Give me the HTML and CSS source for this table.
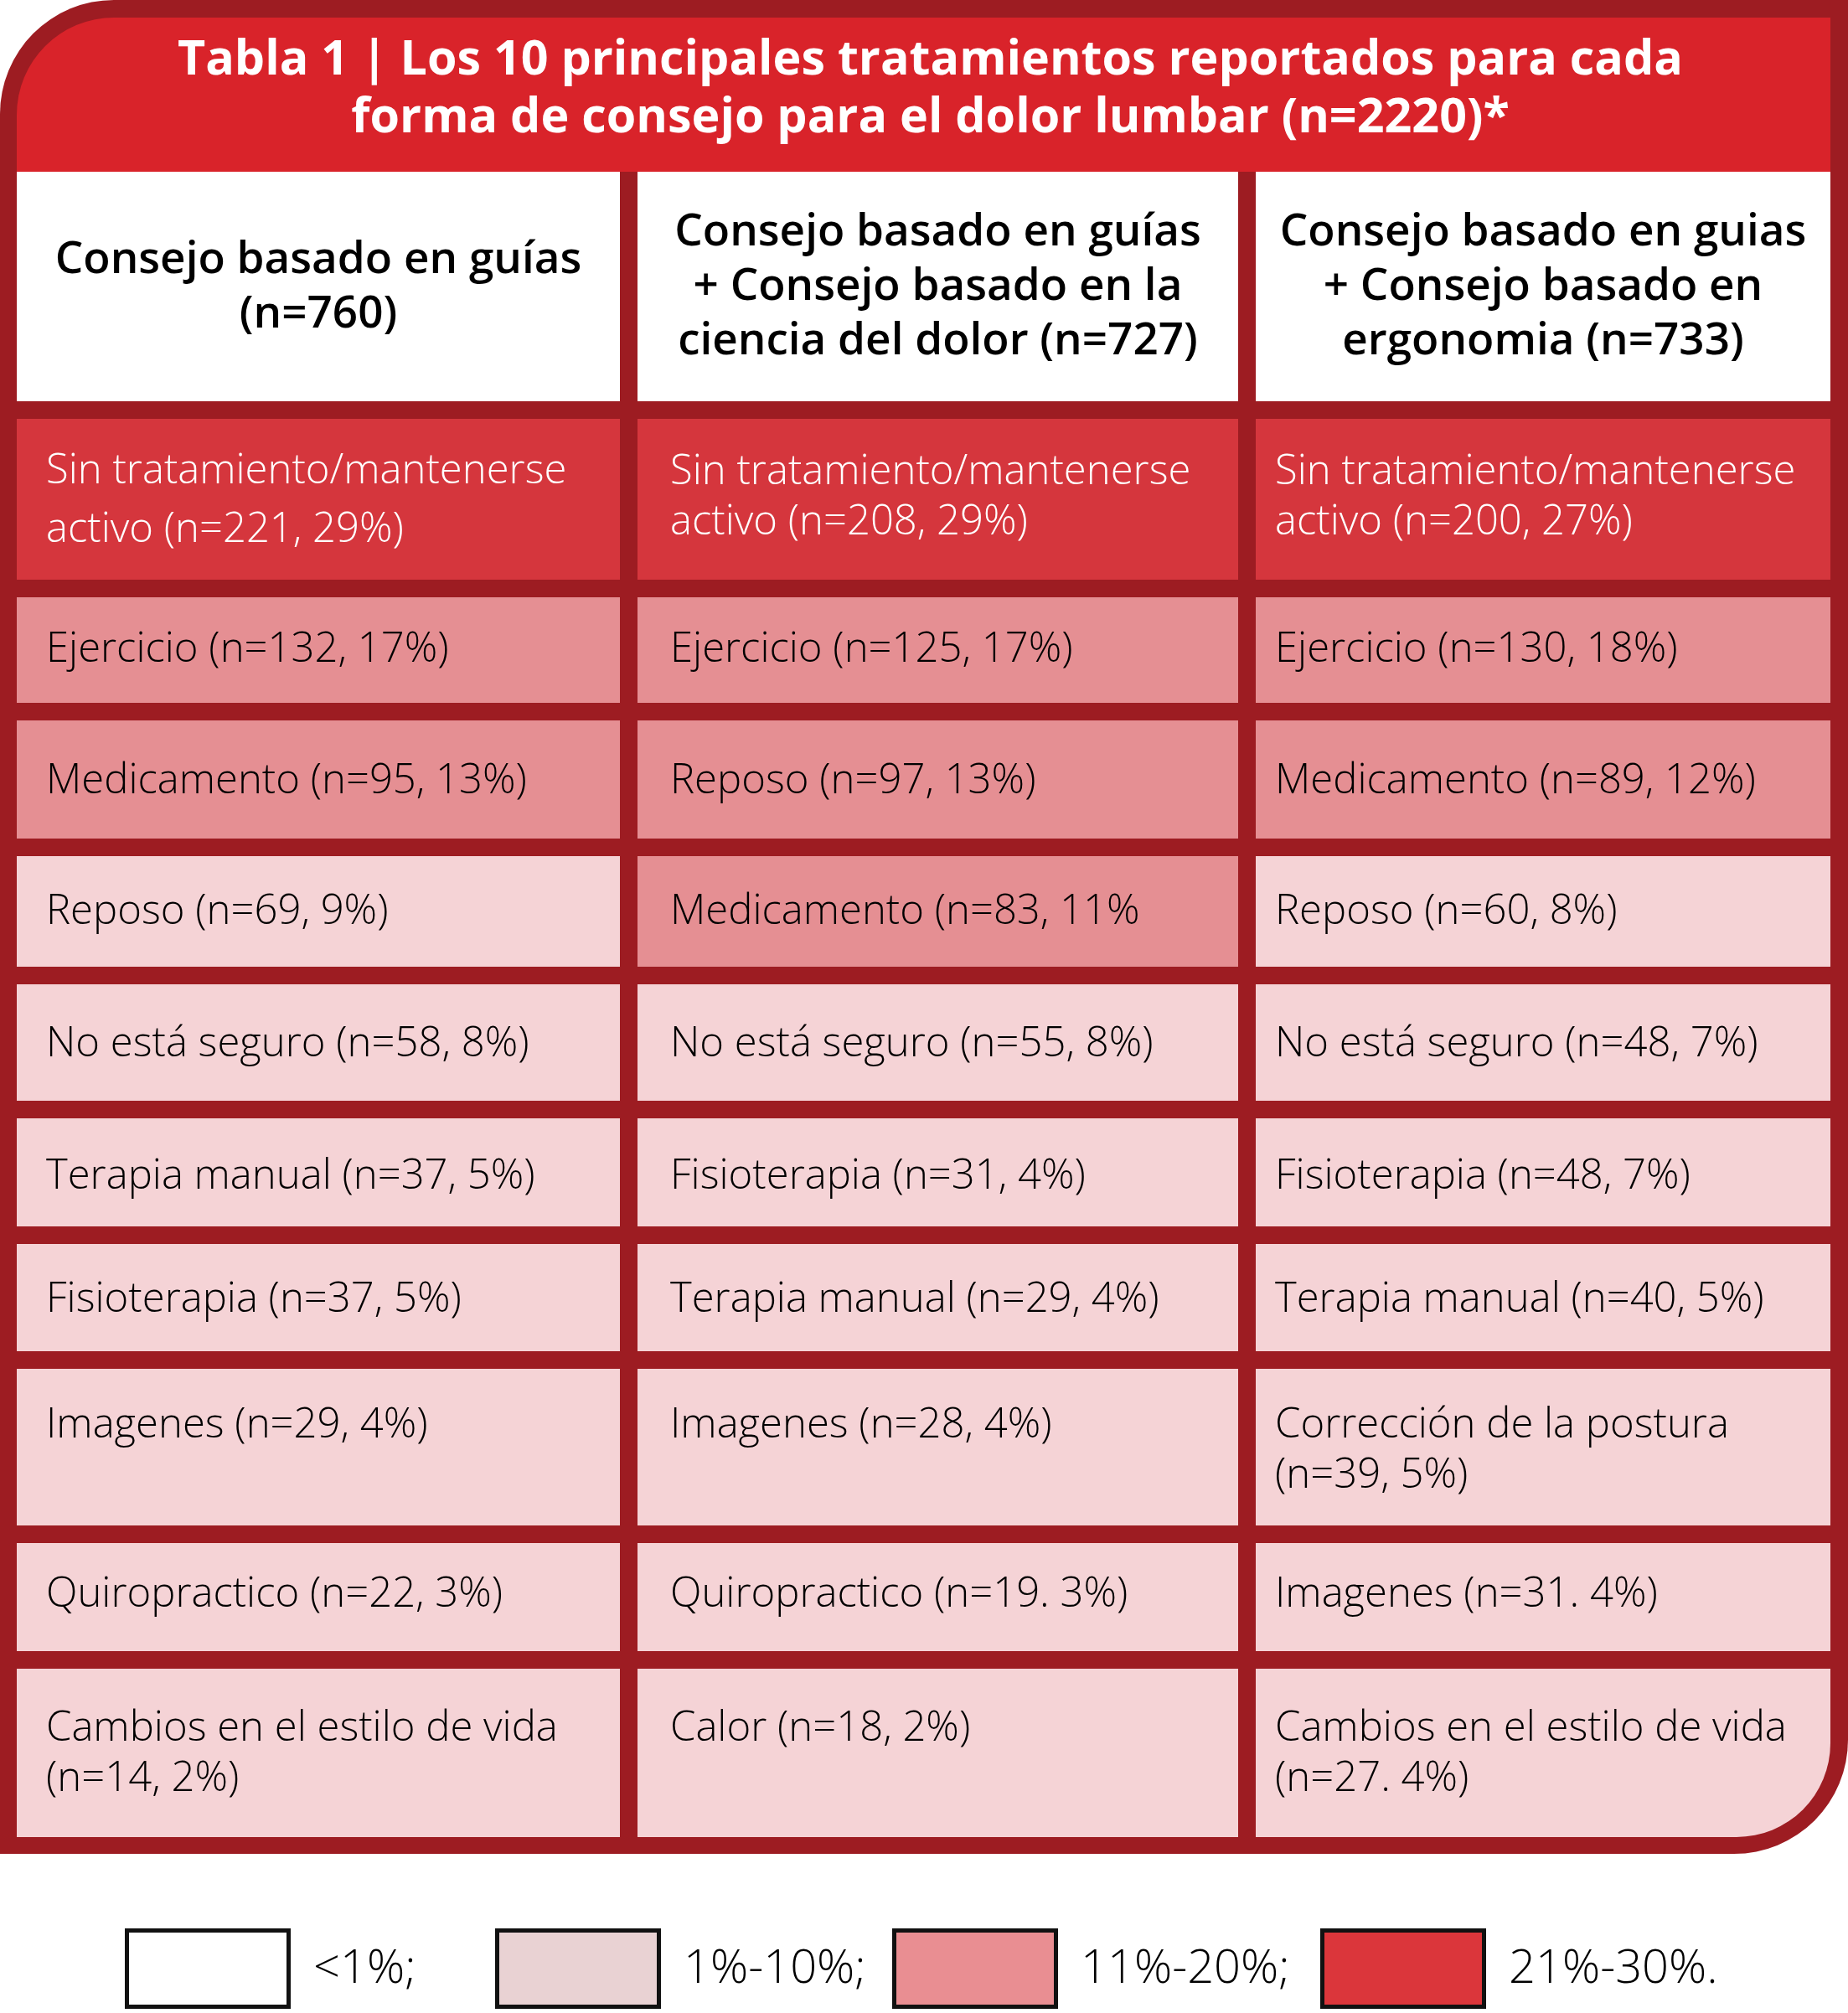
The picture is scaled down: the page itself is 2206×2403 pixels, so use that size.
FILE: index.html
```html
<!DOCTYPE html>
<html lang="es">
<head>
<meta charset="utf-8">
<title>Tabla 1</title>
<link rel="stylesheet" href="styles.css">
</head>
<body>
<div class="page">
  <div class="frame">
    <div class="title">Tabla 1 | Los 10 principales tratamientos reportados para cada<br>forma de consejo para el dolor lumbar (n=2220)*</div>
    <div class="table">
      <div class="row head">
        <div class="hcell">Consejo basado en guías<br>(n=760)</div>
        <div class="hcell">Consejo basado en guías<br>+ Consejo basado en la<br>ciencia del dolor (n=727)</div>
        <div class="hcell">Consejo basado en guias<br>+ Consejo basado en<br>ergonomia (n=733)</div>
      </div>
      <div class="row r1">
        <div class="cell c1 high loose">Sin tratamiento/mantenerse<br>activo (n=221, 29%)</div>
        <div class="cell c2 high">Sin tratamiento/mantenerse<br>activo (n=208, 29%)</div>
        <div class="cell c3 high">Sin tratamiento/mantenerse<br>activo (n=200, 27%)</div>
      </div>
      <div class="row r2">
        <div class="cell c1 mid">Ejercicio (n=132, 17%)</div>
        <div class="cell c2 mid">Ejercicio (n=125, 17%)</div>
        <div class="cell c3 mid">Ejercicio (n=130, 18%)</div>
      </div>
      <div class="row r3">
        <div class="cell c1 mid">Medicamento (n=95, 13%)</div>
        <div class="cell c2 mid">Reposo (n=97, 13%)</div>
        <div class="cell c3 mid">Medicamento (n=89, 12%)</div>
      </div>
      <div class="row r4">
        <div class="cell c1 low">Reposo (n=69, 9%)</div>
        <div class="cell c2 mid">Medicamento (n=83, 11%</div>
        <div class="cell c3 low">Reposo (n=60, 8%)</div>
      </div>
      <div class="row r5">
        <div class="cell c1 low">No está seguro (n=58, 8%)</div>
        <div class="cell c2 low">No está seguro (n=55, 8%)</div>
        <div class="cell c3 low">No está seguro (n=48, 7%)</div>
      </div>
      <div class="row r6">
        <div class="cell c1 low">Terapia manual (n=37, 5%)</div>
        <div class="cell c2 low">Fisioterapia (n=31, 4%)</div>
        <div class="cell c3 low">Fisioterapia (n=48, 7%)</div>
      </div>
      <div class="row r7">
        <div class="cell c1 low">Fisioterapia (n=37, 5%)</div>
        <div class="cell c2 low">Terapia manual (n=29, 4%)</div>
        <div class="cell c3 low">Terapia manual (n=40, 5%)</div>
      </div>
      <div class="row r8">
        <div class="cell c1 low">Imagenes (n=29, 4%)</div>
        <div class="cell c2 low">Imagenes (n=28, 4%)</div>
        <div class="cell c3 low">Corrección de la postura<br>(n=39, 5%)</div>
      </div>
      <div class="row r9">
        <div class="cell c1 low">Quiropractico (n=22, 3%)</div>
        <div class="cell c2 low">Quiropractico (n=19. 3%)</div>
        <div class="cell c3 low">Imagenes (n=31. 4%)</div>
      </div>
      <div class="row r10">
        <div class="cell c1 low">Cambios en el estilo de vida<br>(n=14, 2%)</div>
        <div class="cell c2 low">Calor (n=18, 2%)</div>
        <div class="cell c3 low last">Cambios en el estilo de vida<br>(n=27. 4%)</div>
      </div>
    </div>
  </div>
  <div class="legend">
    <div class="item"><span class="swatch s-none"></span><span class="label">&lt;1%;</span></div>
    <div class="item"><span class="swatch s-low"></span><span class="label">1%-10%;</span></div>
    <div class="item"><span class="swatch s-mid"></span><span class="label">11%-20%;</span></div>
    <div class="item"><span class="swatch s-high"></span><span class="label">21%-30%.</span></div>
  </div>
</div>
</body>
</html>
```
FILE: styles.css
```css
html, body {
  margin: 0;
  padding: 0;
  background: #ffffff;
}

body {
  font-family: "Open Sans", "Liberation Sans", sans-serif;
  color: #000;
}

.page {
  width: 2206px;
  height: 2403px;
  overflow: hidden;
}

.frame {
  background: #9d1c22;
  padding: 21px 21px 20px 20px;
  border-radius: 136px 0 136px 0;
}

.title {
  background: #d9232a;
  color: #ffffff;
  font-weight: 700;
  font-size: 57.4px;
  line-height: 69px;
  text-align: center;
  height: 184px;
  box-sizing: border-box;
  padding: 12px 0 0 16px;
  border-radius: 116px 0 0 0;
}

.table {
  display: grid;
  grid-template-columns: 720px 717px 686px;
  grid-template-rows: 274px 192px 126px 141px 132px 139px 129px 128px 187px 129px 201px;
  column-gap: 21px;
  row-gap: 21px;
}

.row {
  display: contents;
}

.hcell {
  background: #ffffff;
  display: flex;
  align-items: center;
  justify-content: center;
  text-align: center;
  font-weight: 600;
  font-size: 53px;
  line-height: 65px;
  padding-bottom: 9px;
  box-sizing: border-box;
}

.cell {
  font-weight: 300;
  font-size: 49px;
  line-height: 60px;
  box-sizing: border-box;
  color: #000;
}

.c1 { padding-left: 35px; }
.c2 { padding-left: 39px; }
.c3 { padding-left: 23px; }

.high { background: #d5363d; color: #ffffff; }
.mid { background: #e58f93; }
.low { background: #f5d3d6; }

.last { border-bottom-right-radius: 112px; }

.r1 > .cell { padding-top: 29px; }
.r1 > .cell.loose { line-height: 70px; padding-top: 23px; }
.r2 > .cell { padding-top: 28px; }
.r3 > .cell { padding-top: 38px; }
.r4 > .cell { padding-top: 32px; }
.r5 > .cell { padding-top: 37px; }
.r6 > .cell { padding-top: 35px; }
.r7 > .cell { padding-top: 32px; }
.r8 > .cell { padding-top: 33px; }
.r9 > .cell { padding-top: 27px; }
.r10 > .cell { padding-top: 37px; }

.legend {
  margin-top: 89px;
  padding-left: 149px;
  display: grid;
  grid-template-columns: 442px 474px 511px auto;
  align-items: center;
}

.item {
  display: flex;
  align-items: center;
}

.swatch {
  display: block;
  width: 198px;
  height: 96px;
  border: 5px solid #111111;
  box-sizing: border-box;
  flex: none;
}

.s-none { background: #ffffff; }
.s-low { background: #e9d2d3; }
.s-mid { background: #e98e92; }
.s-high { background: #db363b; }

.label {
  margin-left: 27px;
  font-weight: 300;
  font-size: 56px;
  line-height: 66px;
  padding-bottom: 10px;
}
```
